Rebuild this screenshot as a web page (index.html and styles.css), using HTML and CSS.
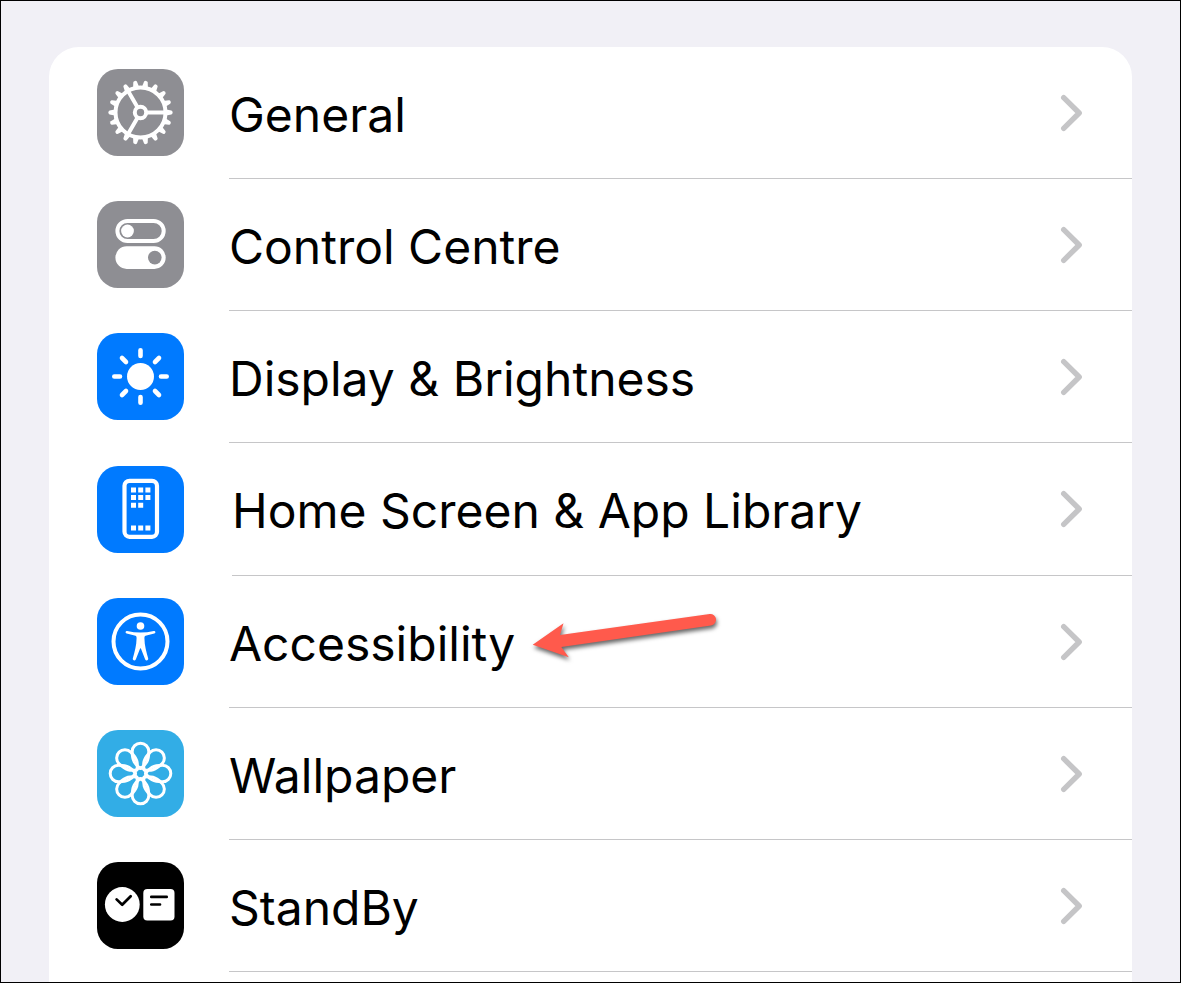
FILE: index.html
```html
<!DOCTYPE html>
<html lang="en-GB">
<head>
<meta charset="utf-8">
<meta name="viewport" content="width=device-width, initial-scale=1">
<title>Settings</title>
<link rel="stylesheet" href="styles.css">
</head>
<body>
<svg class="defs" aria-hidden="true">
  <defs>
    <symbol id="chevron" viewBox="0 0 24 38"><path d="M3.7 3.7 19.2 19 3.7 34.300" fill="none" stroke="#c5c5c7" stroke-width="5.400" stroke-linecap="round" stroke-linejoin="round"/></symbol>
    <path id="tooth" d="M40.300 19 41.600 12.600Q41.900 11.400 43.500 11.400T45.400 12.600L46.700 19Z"/>
    <g id="teeth3"><use href="#tooth" transform="rotate(10 43.500 43.500)"/><use href="#tooth" transform="rotate(30 43.500 43.500)"/><use href="#tooth" transform="rotate(50 43.500 43.500)"/></g>
    <path id="petal" d="M43.500 38.500C38 34.500 35.200 31 35.200 21.500A8.300 8.300 0 0 1 51.800 21.500C51.800 31 49 34.500 43.500 38.500Z"/>
  </defs>
</svg>
<main class="screen">
  <nav class="card" aria-label="Settings">
    <a class="row" href="#general">
      <svg class="icon grey" viewBox="0 0 87 87" aria-hidden="true">
        <g fill="#fff">
          <use href="#teeth3"/>
          <use href="#teeth3" transform="rotate(60 43.500 43.500)"/>
          <use href="#teeth3" transform="rotate(120 43.500 43.500)"/>
          <use href="#teeth3" transform="rotate(180 43.500 43.500)"/>
          <use href="#teeth3" transform="rotate(240 43.500 43.500)"/>
          <use href="#teeth3" transform="rotate(300 43.500 43.500)"/>
        </g>
        <g fill="none" stroke="#fff" stroke-width="4">
          <circle cx="43.500" cy="43.500" r="25"/>
          <circle cx="43.500" cy="43.500" r="5.700"/>
          <path d="M49.500 43.500H69M40.500 38.300 30.800 21.500M40.500 48.700 30.800 65.500"/>
        </g>
      </svg>
      <span class="content"><span class="label">General</span><svg class="chevron" aria-hidden="true"><use href="#chevron"/></svg></span>
    </a>
    <a class="row" href="#control-centre">
      <svg class="icon grey" viewBox="0 0 87 87" aria-hidden="true">
        <rect x="20.400" y="19.900" width="46.300" height="20.200" rx="10.100" fill="none" stroke="#fff" stroke-width="4"/>
        <circle cx="30.500" cy="30" r="6.400" fill="#fff"/>
        <rect x="18.400" y="45.300" width="50.300" height="22.600" rx="11.300" fill="#fff"/>
        <circle cx="57.800" cy="56.600" r="6.800" fill="#8e8e93"/>
      </svg>
      <span class="content"><span class="label">Control Centre</span><svg class="chevron" aria-hidden="true"><use href="#chevron"/></svg></span>
    </a>
    <a class="row" href="#display">
      <svg class="icon blue" viewBox="0 0 87 87" aria-hidden="true">
        <circle cx="43.500" cy="43.500" r="13.500" fill="#fff"/>
        <path d="M43.500 23V17.300M43.500 64v5.700M23 43.500H17.300M64 43.500h5.700M29 29 25 25M58 29l4-4M29 58l-4 4M58 58l4 4" stroke="#fff" stroke-width="4.600" stroke-linecap="round"/>
      </svg>
      <span class="content"><span class="label">Display &amp; Brightness</span><svg class="chevron" aria-hidden="true"><use href="#chevron"/></svg></span>
    </a>
    <a class="row home" href="#home-screen">
      <svg class="icon blue" viewBox="0 0 87 87" aria-hidden="true">
        <rect x="27.500" y="14.800" width="32.500" height="56" rx="5" fill="none" stroke="#fff" stroke-width="4.200"/>
        <path d="M34 21.500h5v5h-5zM41.200 21.500h5v5h-5zM48.400 21.500h5v5h-5zM34 29h5v5h-5zM41.200 29h5v5h-5zM48.400 29h5v5h-5zM34 36.700h5v5h-5zM41.200 36.700h5v5h-5zM34 59.400h5v5h-5zM41.200 59.400h5v5h-5zM48.400 59.400h5v5h-5z" fill="#fff"/>
      </svg>
      <span class="content"><span class="label">Home Screen &amp; App Library</span><svg class="chevron" aria-hidden="true"><use href="#chevron"/></svg></span>
    </a>
    <a class="row" href="#accessibility">
      <svg class="icon blue" viewBox="0 0 87 87" aria-hidden="true">
        <circle cx="43.500" cy="43.500" r="27" fill="none" stroke="#fff" stroke-width="4"/>
        <circle cx="43.500" cy="28" r="3.800" fill="#fff"/>
        <path d="M30.200 33Q43.500 36 56.800 33C58.700 32.700 59 35.100 57.300 35.600L48.500 37.800Q47.300 38.200 47.400 40C47.500 48 49.500 54 51.200 60.600C51.600 62.500 48.900 63.100 48.200 61.400L43.900 50.500Q43.500 49.800 43.100 50.500L38.800 61.400C38.100 63.100 35.400 62.500 35.800 60.600C37.500 54 39.500 48 39.600 40Q39.700 38.200 38.500 37.800L29.700 35.600C28 35.100 28.300 32.700 30.200 33Z" fill="#fff"/>
      </svg>
      <span class="content"><span class="label">Accessibility</span><svg class="chevron" aria-hidden="true"><use href="#chevron"/></svg></span>
      <svg class="arrow" viewBox="0 0 200 64" aria-hidden="true">
        <path d="M4.700 36.700 35.500 15.300 32 27 181.700 6A5.700 5.700 0 0 1 183 17.400L33.300 39 40.800 49.300Z" fill="#ff5a4c"/>
      </svg>
    </a>
    <a class="row" href="#wallpaper">
      <svg class="icon cyan" viewBox="0 0 87 87" aria-hidden="true">
        <g fill="none" stroke="#fff" stroke-width="3" stroke-linejoin="round">
          <use href="#petal"/>
          <use href="#petal" transform="rotate(45 43.500 43.500)"/>
          <use href="#petal" transform="rotate(90 43.500 43.500)"/>
          <use href="#petal" transform="rotate(135 43.500 43.500)"/>
          <use href="#petal" transform="rotate(180 43.500 43.500)"/>
          <use href="#petal" transform="rotate(225 43.500 43.500)"/>
          <use href="#petal" transform="rotate(270 43.500 43.500)"/>
          <use href="#petal" transform="rotate(315 43.500 43.500)"/>
          <circle cx="43.500" cy="43.500" r="5.500"/>
        </g>
      </svg>
      <span class="content"><span class="label">Wallpaper</span><svg class="chevron" aria-hidden="true"><use href="#chevron"/></svg></span>
    </a>
    <a class="row" href="#standby">
      <svg class="icon black" viewBox="0 0 87 87" aria-hidden="true">
        <circle cx="25.300" cy="42.500" r="17.400" fill="#fff"/>
        <rect x="46.300" y="27" width="31.200" height="31.600" rx="4" fill="#fff"/>
        <path d="M19.600 37.400 25.200 42.800 33.700 34.300M54.300 34.900H69.700M54.300 42.500H63" fill="none" stroke="#000" stroke-width="2.700" stroke-linecap="round" stroke-linejoin="round"/>
      </svg>
      <span class="content"><span class="label">StandBy</span><svg class="chevron" aria-hidden="true"><use href="#chevron"/></svg></span>
    </a>
  </nav>
</main>
</body>
</html>
```
FILE: styles.css
```css
* {
  box-sizing: border-box;
}

body {
  margin: 0;
  font-family: Inter, "Liberation Sans", sans-serif;
  color: #000;
}

.defs {
  position: absolute;
  width: 0;
  height: 0;
}

.screen {
  display: flex;
  flex-direction: column;
  height: 100vh;
  padding: 46px 48px 0;
  overflow: hidden;
  border: 1px solid #000;
  background: #f1f0f6;
}

.card {
  flex: 1 0 auto;
  border-radius: 30px 30px 0 0;
  background: #fff;
}

.row {
  position: relative;
  display: flex;
  gap: 45px;
  padding-left: 48px;
  color: inherit;
  text-decoration: none;
}

.icon {
  flex: none;
  width: 87px;
  height: 87px;
  margin: 22px 0 23px;
  border-radius: 21px;
}

.grey { background: #8e8e93; }
.blue { background: #007aff; }
.cyan { background: #32ade6; }
.black { background: #000; }

.content {
  flex: 1;
  display: flex;
  align-items: center;
  justify-content: space-between;
  padding-right: 48px;
  border-bottom: 1px solid #c6c6c8;
}

.label {
  padding-top: 4px;
  font-size: 48px;
  line-height: 60px;
  white-space: nowrap;
}

.chevron {
  flex: none;
  width: 24px;
  height: 38px;
}

.home {
  gap: 48px;
}

.home .icon {
  margin-top: 23px;
}

.arrow {
  position: absolute;
  top: 32px;
  left: 479px;
  width: 200px;
  height: 64px;
  filter: drop-shadow(1px 3px 2px rgba(0, 0, 0, 0.6));
}
```
